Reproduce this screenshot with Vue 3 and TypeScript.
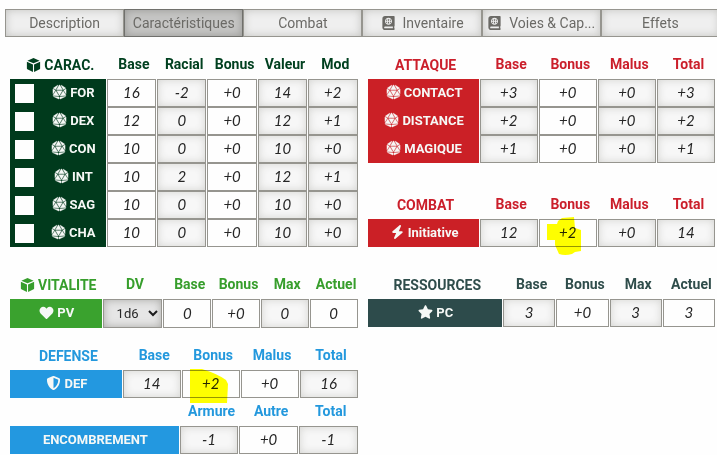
<script setup lang="ts">
import { ref } from 'vue'

interface Icon { box: string; d: string }
interface Cell { v: string; edit?: boolean; mark?: 'cross' | 'block'; select?: boolean }
interface Row { label: string; icon?: string; check?: boolean; cells: Cell[] }
interface Block { title: string; icon?: string; theme: string; cols: string[]; rows: Row[] }

const icons: Record<string, Icon> = {
  cube: {
    box: '0 0 512 512',
    d: 'M256 4L480 96 256 196 32 96zM14 134L236 234V508L34 412Q14 402 14 382zM498 134L276 234V508L478 412Q498 402 498 382z',
  },
  d20: {
    box: '0 0 480 512',
    d: 'M106.75 215.06L1.2 370.95c-3.08 5 .1 11.5 5.93 12.14l208.26 22.07-108.64-190.1zM7.41 315.43L82.7 193.08 6.06 147.1c-2.67-1.62-6.06.3-6.06 3.43v162.81c0 4.03 5.29 5.53 7.41 2.09zM18.25 423.6l194.4 87.66c5.3 2.45 11.35-1.43 11.35-7.26v-65.67l-203.55-22.3c-4.45-.5-6.23 5.59-2.2 7.57zm81.22-257.78L179.4 22.88c4.34-7.06-3.59-15.25-10.78-11.14L17.81 110.35c-2.47 1.62-2.39 5.26.13 6.78l81.53 48.69zM240 176h109.21L253.63 7.62C250.5 2.54 245.25 0 240 0s-10.5 2.54-13.63 7.62L130.79 176H240zm233.94-28.9l-76.64 45.99 75.29 122.35c2.11 3.44 7.41 1.94 7.41-2.1V150.53c0-3.11-3.39-5.03-6.06-3.43zm-93.41 18.72l81.53-48.7c2.53-1.52 2.6-5.16.13-6.78l-150.81-98.6c-7.19-4.11-15.12 4.08-10.78 11.14l79.93 142.94zm79.02 250.21L256 438.32v65.67c0 5.84 6.05 9.71 11.35 7.26l194.4-87.66c4.03-1.97 2.25-8.06-2.2-7.56zm-86.3-200.97l-108.63 190.1 208.26-22.07c5.83-.65 9.01-7.14 5.93-12.14L373.25 215.06zM240 208H139.57L240 383.75 340.43 208H240z',
  },
  heart: {
    box: '0 0 512 512',
    d: 'M462.3 62.6C407.5 15.9 326 24.3 275.7 76.2L256 96.5l-19.7-20.3C186.1 24.3 104.5 15.9 49.7 62.6c-62.8 53.6-66.1 149.8-9.9 207.9l193.5 199.8c12.5 12.9 32.8 12.9 45.3 0l193.5-199.8c56.3-58.1 53-154.3-9.8-207.9z',
  },
  shield: {
    box: '0 0 512 512',
    d: 'M466.5 83.7l-192-80a48.15 48.15 0 0 0-36.9 0l-192 80C27.7 91.1 16 108.6 16 128c0 198.5 114.5 335.7 221.5 380.3 11.8 4.9 25.1 4.9 36.9 0C360.1 472.6 496 349.3 496 128c0-19.4-11.7-36.9-29.5-44.3zM256.1 446.3l-.1-381 175.9 73.3c-3.3 151.4-82.1 261.1-175.8 307.7z',
  },
  star: {
    box: '0 0 576 512',
    d: 'M259.3 17.8L194 150.2 47.9 171.5c-26.2 3.8-36.7 36.1-17.7 54.6l105.7 103-25 145.5c-4.5 26.3 23.2 46 46.4 33.7L288 439.6l130.7 68.7c23.2 12.2 50.9-7.4 46.4-33.7l-25-145.5 105.7-103c19-18.5 8.5-50.8-17.7-54.6L382 150.2 316.7 17.8c-11.7-23.6-45.6-23.9-57.4 0z',
  },
  bolt: {
    box: '0 0 448 512',
    d: 'M349.4 44.6c5.9-13.7 1.5-29.7-10.6-38.5s-28.6-8-39.9 1.8l-256 224c-10 8.8-13.6 22.9-8.9 35.3S50.7 288 64 288H175.5L98.6 467.4c-5.9 13.7-1.5 29.7 10.6 38.5s28.6 8 39.9-1.8l256-224c10-8.8 13.6-22.9 8.9-35.3s-16.6-20.7-30-20.7H272.5L349.4 44.6z',
  },
  atlas: {
    box: '0 0 448 512',
    d: 'M318.38 208h-39.09c-1.49 27.03-6.54 51.35-14.21 70.41 27.71-13.24 48.02-39.19 53.3-70.41zm0-32c-5.29-31.22-25.59-57.17-53.3-70.41 7.68 19.06 12.72 43.38 14.21 70.41h39.09zM224 97.31c-7.69 7.45-20.77 34.42-23.43 78.69h46.87c-2.67-44.26-15.75-71.24-23.44-78.69zm-41.08 8.28c-27.71 13.24-48.02 39.19-53.3 70.41h39.09c1.49-27.03 6.53-51.35 14.21-70.41zm0 172.82c-7.68-19.06-12.72-43.38-14.21-70.41h-39.09c5.28 31.22 25.59 57.17 53.3 70.41zM247.43 208h-46.87c2.66 44.26 15.74 71.24 23.43 78.69 7.7-7.45 20.78-34.43 23.44-78.69zM448 358.4V25.6c0-16-9.6-25.6-25.6-25.6H96C41.6 0 0 41.6 0 96v320c0 54.4 41.6 96 96 96h326.4c12.8 0 25.6-9.6 25.6-25.6v-16c0-6.4-3.2-12.8-9.6-19.2-3.2-16-3.2-60.8 0-73.6 6.4-3.2 9.6-9.6 9.6-19.2zM224 64c70.69 0 128 57.31 128 128s-57.31 128-128 128S96 262.69 96 192 153.31 64 224 64zm160 384H96c-19.2 0-32-12.8-32-32s16-32 32-32h288v64z',
  },
}

const marks = {
  cross: 'M8 9H18L19 6L23 3L35 2L36 13L42 15V36L36 37L33 39Q26 41 20 39L16 30V25H8z',
  block: 'M8 3H20Q36 8 44 14L46 18L45 37H8z',
}

const tabs = [
  { label: 'Description' },
  { label: 'Caractéristiques' },
  { label: 'Combat' },
  { label: 'Inventaire', icon: 'atlas' },
  { label: 'Voies & Cap...', icon: 'atlas' },
  { label: 'Effets' },
]
const active = ref('Caractéristiques')

const r = (v: string): Cell => ({ v })
const e = (v: string, mark?: 'cross' | 'block'): Cell => ({ v, edit: true, mark })

const carac = (label: string, base: string, racial: string, value: string, mod: string): Row => ({
  label, icon: 'd20', check: true, cells: [e(base), r(racial), e('+0'), r(value), r(mod)],
})
const attack = (label: string, n: string): Row => ({
  label, icon: 'd20', cells: [r(n), e('+0'), r('+0'), r(n)],
})

const columns: Block[][] = [
  [
    {
      title: 'CARAC.', icon: 'cube', theme: 'carac', cols: ['Base', 'Racial', 'Bonus', 'Valeur', 'Mod'],
      rows: [
        carac('FOR', '16', '-2', '14', '+2'),
        carac('DEX', '12', '0', '12', '+1'),
        carac('CON', '10', '0', '10', '+0'),
        carac('INT', '10', '2', '12', '+1'),
        carac('SAG', '10', '0', '10', '+0'),
        carac('CHA', '10', '0', '10', '+0'),
      ],
    },
    {
      title: 'VITALITE', icon: 'cube', theme: 'vital', cols: ['DV', 'Base', 'Bonus', 'Max', 'Actuel'],
      rows: [{ label: 'PV', icon: 'heart', cells: [{ v: '1d6', select: true }, e('0'), e('+0'), r('0'), e('0')] }],
    },
    {
      title: 'DEFENSE', theme: 'defense', cols: ['Base', 'Bonus', 'Malus', 'Total'],
      rows: [{ label: 'DEF', icon: 'shield', cells: [r('14'), e('+2', 'block'), e('+0'), r('16')] }],
    },
    {
      title: '', theme: 'load', cols: ['Armure', 'Autre', 'Total'],
      rows: [{ label: 'ENCOMBREMENT', cells: [r('-1'), e('+0'), r('-1')] }],
    },
  ],
  [
    {
      title: 'ATTAQUE', theme: 'attack', cols: ['Base', 'Bonus', 'Malus', 'Total'],
      rows: [attack('CONTACT', '+3'), attack('DISTANCE', '+2'), attack('MAGIQUE', '+1')],
    },
    {
      title: 'COMBAT', theme: 'combat', cols: ['Base', 'Bonus', 'Malus', 'Total'],
      rows: [{ label: 'Initiative', icon: 'bolt', cells: [r('12'), e('+2', 'cross'), r('+0'), r('14')] }],
    },
    {
      title: 'RESSOURCES', theme: 'resource', cols: ['Base', 'Bonus', 'Max', 'Actuel'],
      rows: [{ label: 'PC', icon: 'star', cells: [r('3'), e('+0'), r('3'), e('3')] }],
    },
  ],
]
</script>

<template>
  <main class="sheet">
    <nav class="tabs">
      <button
        v-for="t in tabs"
        :key="t.label"
        type="button"
        class="tab"
        :class="{ active: active === t.label }"
        @click="active = t.label"
      >
        <svg v-if="t.icon" class="icon" :viewBox="icons[t.icon].box" aria-hidden="true"><path :d="icons[t.icon].d" /></svg>
        <span>{{ t.label }}</span>
      </button>
    </nav>

    <div class="columns">
      <div v-for="(col, ci) in columns" :key="ci" class="column">
        <table v-for="b in col" :key="b.theme" class="block" :class="b.theme">
          <thead>
            <tr>
              <th class="title" scope="col">
                <svg v-if="b.icon" class="icon" :viewBox="icons[b.icon].box" aria-hidden="true"><path :d="icons[b.icon].d" /></svg>
                <span>{{ b.title }}</span>
              </th>
              <th v-for="c in b.cols" :key="c" scope="col">{{ c }}</th>
            </tr>
          </thead>
          <tbody>
            <tr v-for="row in b.rows" :key="row.label">
              <th class="name" scope="row">
                <input v-if="row.check" type="checkbox" class="check" :aria-label="row.label" />
                <button type="button" class="roll">
                  <svg v-if="row.icon" class="icon" :class="row.icon" :viewBox="icons[row.icon].box" aria-hidden="true"><path :d="icons[row.icon].d" /></svg>
                  <span>{{ row.label }}</span>
                </button>
              </th>
              <td v-for="(c, i) in row.cells" :key="i">
                <template v-if="c.select">
                  <select class="die" :aria-label="b.cols[i]">
                    <option>{{ c.v }}</option>
                  </select>
                  <svg class="chevron" viewBox="0 0 10 8" aria-hidden="true"><path d="M1 2l4 4 4-4" /></svg>
                </template>
                <input
                  v-else
                  type="text"
                  class="value"
                  :class="{ locked: !c.edit }"
                  :value="c.v"
                  :readonly="!c.edit"
                  :aria-label="`${row.label} ${b.cols[i]}`"
                />
                <svg v-if="c.mark" class="mark" viewBox="0 0 58 42" aria-hidden="true"><path :d="marks[c.mark]" /></svg>
              </td>
            </tr>
          </tbody>
        </table>
      </div>
    </div>
  </main>
</template>

<style>
body {
  background: #fefefe;
}
</style>

<style scoped>
.sheet {
  padding-top: 9px;
  overflow: hidden;
  font-family: Roboto, "Liberation Sans", sans-serif;
  font-size: 14px;
}
.sheet * {
  box-sizing: border-box;
}
.tabs {
  display: grid;
  grid-template-columns: repeat(6, 1fr);
  margin: 0 -3px 0 5px;
}
.tab {
  display: flex;
  align-items: center;
  justify-content: center;
  gap: 7px;
  height: 28px;
  padding: 0 4px;
  border: 1px solid #96958f;
  background: #efefef;
  box-shadow: inset 0 0 9px #c2c2bf;
  color: #6b6a66;
  font: inherit;
  white-space: nowrap;
}
.tab.active {
  border-color: #70706c;
  background: #c6c6c5;
  box-shadow: inset 0 0 9px #969693;
}
.icon {
  flex: none;
  width: 15px;
  height: 14px;
  fill: currentColor;
}
.d20 {
  stroke: currentColor;
  stroke-width: 14;
  overflow: visible;
}
.columns {
  display: grid;
  grid-template-columns: 1fr 1fr;
  gap: 10px;
  padding: 14px 2px 0 10px;
}
.block {
  display: block;
  color: var(--ink);
}
thead,
tbody {
  display: block;
}
tr {
  display: grid;
  grid-template-columns: var(--grid);
  column-gap: 1px;
}
th,
td {
  display: block;
  min-width: 0;
  padding: 0;
}
thead th {
  height: 28px;
  padding-left: 5px;
  line-height: 27px;
  text-align: center;
  white-space: nowrap;
}
thead .title,
.roll {
  display: flex;
  align-items: center;
  justify-content: center;
  gap: 3px;
}
.name {
  display: flex;
  align-items: center;
  background: var(--fill);
}
.roll {
  flex: 1;
  min-width: 0;
  height: 28px;
  padding: 0 0 2px 2px;
  border: 0;
  background: none;
  color: #f6f8f6;
  font: inherit;
  font-size: 13px;
  font-weight: 700;
}
.check {
  appearance: none;
  flex: none;
  width: 19px;
  height: 19px;
  margin: 0 5px;
  background: #fefefe;
}
td {
  position: relative;
}
.value,
.die {
  display: block;
  width: 100%;
  height: 28px;
  margin: 0;
  padding: 0;
  border: 1px solid #96958f;
  border-radius: 0;
  background: #fefefe;
  color: #262626;
}
.value {
  padding-bottom: 2px;
  font: italic 15px Lato, sans-serif;
  text-align: center;
}
.locked {
  background: #f7f7f7;
  box-shadow: inset 0 0 9px #d4d4d1;
}
.die {
  appearance: none;
  padding-left: 13px;
  background: #e6e6e6;
  box-shadow: inset 0 0 9px #a9a9a6;
  font: 13px Roboto, sans-serif;
}
.chevron {
  position: absolute;
  top: 10px;
  right: 4px;
  width: 10px;
  height: 8px;
  fill: none;
  stroke: #1c1c1c;
  stroke-width: 2;
  pointer-events: none;
}
.mark {
  position: absolute;
  top: -4px;
  left: 0;
  width: 58px;
  height: 42px;
  fill: #ffff00;
  mix-blend-mode: multiply;
  pointer-events: none;
}
.carac {
  --ink: #00401f;
  --fill: #003a1c;
  --grid: 95fr repeat(5, 49fr);
}
.vital {
  --ink: #379e2c;
  --fill: #3aa22e;
  --grid: 92fr 60fr repeat(4, 48fr);
  margin-top: 24px;
}
.vital .value,
.vital .die {
  height: 29px;
}
.defense,
.load {
  --ink: #2398dd;
  --fill: #2398e0;
  --grid: 112fr repeat(4, 58fr);
}
.defense {
  margin-top: 14px;
}
.load {
  --grid: 170fr repeat(3, 59fr);
}
.attack,
.combat {
  --ink: #cb1f2b;
  --fill: #cb2026;
  --grid: 111fr repeat(4, 58fr);
}
.combat {
  margin-top: 28px;
}
.resource {
  --ink: #2f4d4b;
  --fill: #2d4b4b;
  --grid: 134fr repeat(4, 52fr);
  margin-top: 24px;
}
</style>
